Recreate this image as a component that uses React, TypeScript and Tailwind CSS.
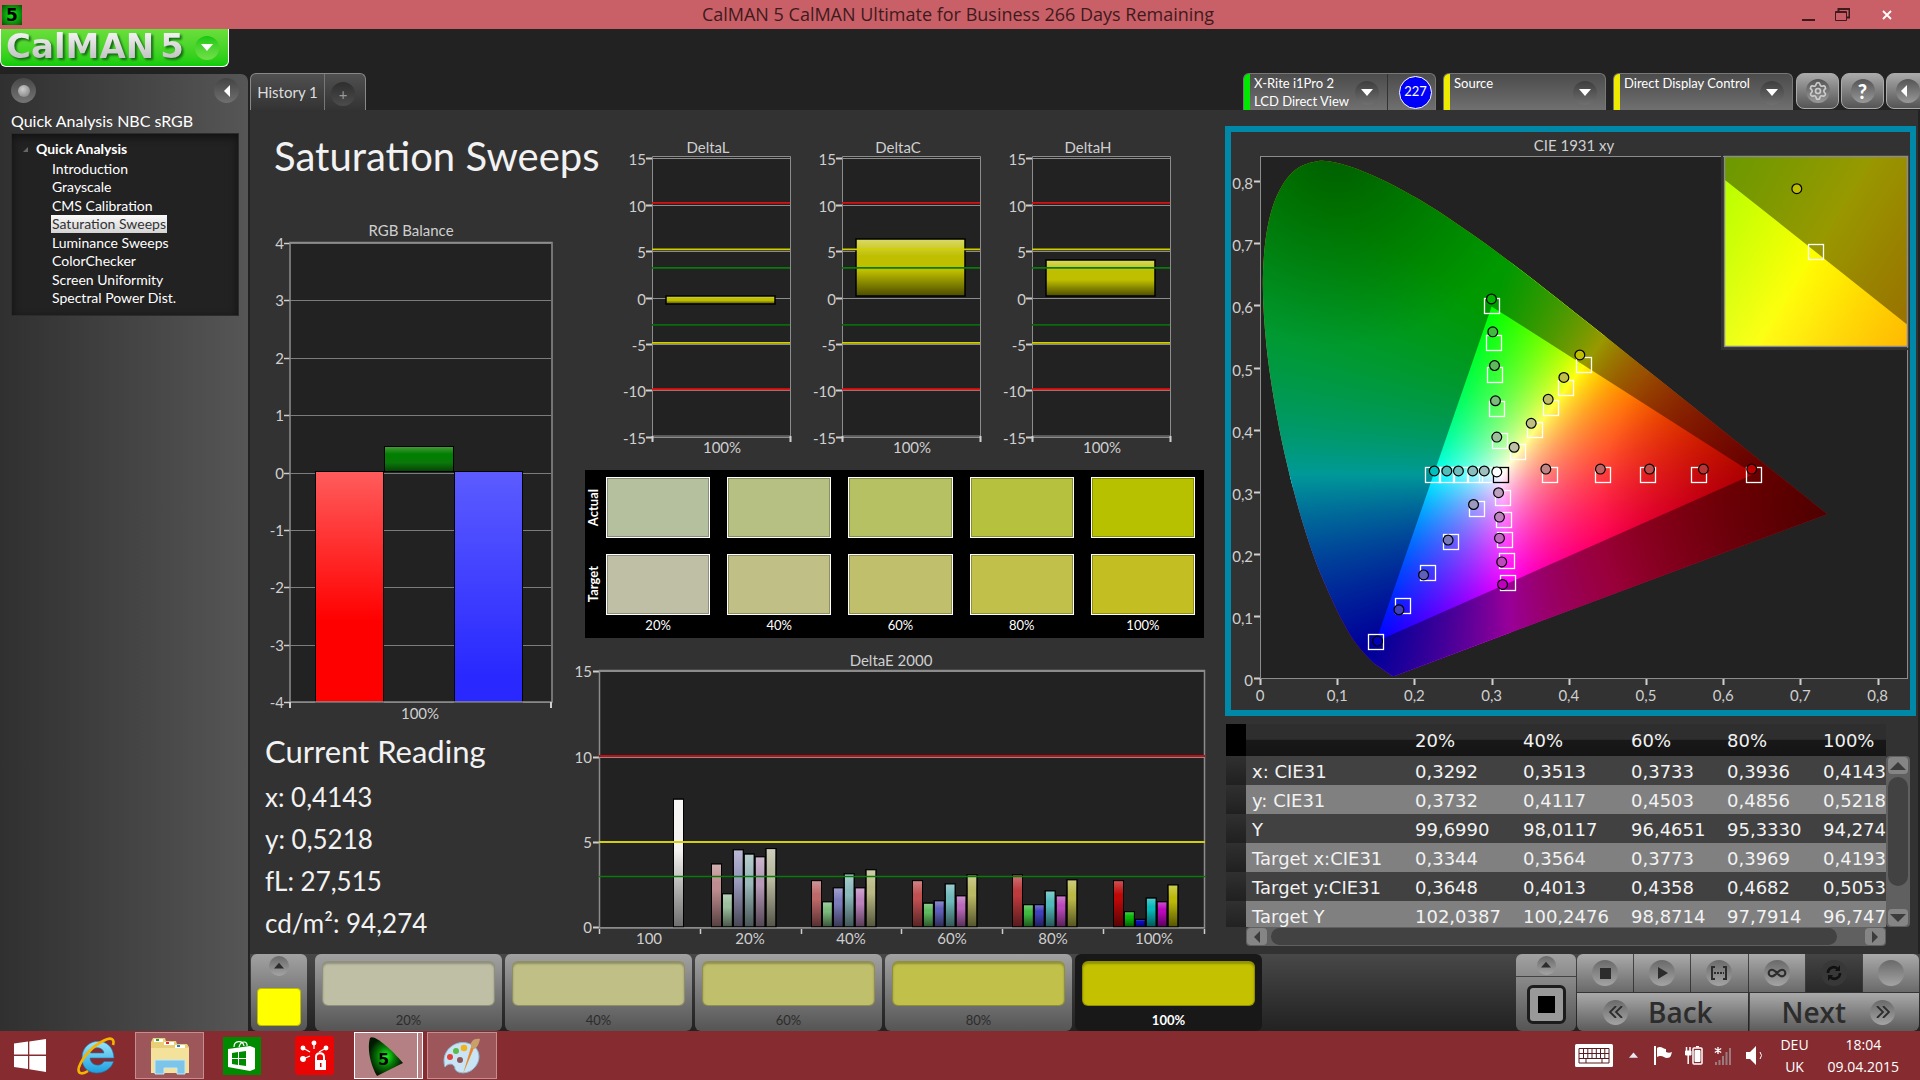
import type { ReactNode } from "react";
import { Infinity as InfinityIcon, Settings } from "lucide-react";

type Point = [number, number];

const LABEL = "fill-[#cfcfcf] font-['Lato',sans-serif] text-[15px]";

/* ---------- CIE colour field ---------- */

const WHITE: Point = [0.3127, 0.329];
const RED: Point = [0.64, 0.33];
const GREEN: Point = [0.3, 0.6];
const BLUE: Point = [0.15, 0.06];

const LOCUS: Point[] = [
  [0.1741, 0.005], [0.1714, 0.0051], [0.1644, 0.0109], [0.1566, 0.0177], [0.144, 0.0297],
  [0.1241, 0.0578], [0.1096, 0.0868], [0.0913, 0.1327], [0.0687, 0.2007], [0.0454, 0.295],
  [0.0235, 0.4127], [0.0082, 0.5384], [0.0039, 0.6548], [0.0139, 0.7502], [0.0389, 0.812],
  [0.0743, 0.8338], [0.1142, 0.8262], [0.1547, 0.8059], [0.1929, 0.7816], [0.2296, 0.7543],
  [0.3016, 0.6923], [0.3731, 0.6245], [0.4441, 0.5547], [0.5125, 0.4866], [0.5752, 0.4242],
  [0.627, 0.3725], [0.6915, 0.3083], [0.7347, 0.2653],
];

type View = { x0: number; y0: number; sx: number; sy: number; w: number; h: number };

const toPx = (v: View, [x, y]: Point): Point => [v.x0 + x * v.sx, v.y0 - y * v.sy];

const toRgb = (x: number, y: number) => {
  const z = 1 - x - y;
  return [
    3.2406 * x - 1.5372 * y - 0.4986 * z,
    -0.9689 * x + 1.8758 * y + 0.0415 * z,
    0.0557 * x - 0.204 * y + 1.057 * z,
  ];
};

// The ratio of two channels is constant along any ray that leaves the third
// primary, so one channel of a sector is a conic gradient round that primary.
const channelGradient = (v: View, center: Point, channel: number, max: number) => {
  const [cx, cy] = toPx(v, center);
  const stops: string[] = [];
  for (let deg = 0; deg <= 360; deg += 1) {
    const a = (deg * Math.PI) / 180;
    const px = cx + Math.sin(a) * v.sx * 0.05;
    const py = cy - Math.cos(a) * v.sx * 0.05;
    const rgb = toRgb((px - v.x0) / v.sx, (v.y0 - py) / v.sy);
    const ratio = rgb[max] <= 0 ? 0 : Math.min(1, Math.max(0, rgb[channel] / rgb[max]));
    const out = [0, 0, 0];
    out[channel] = Math.round(255 * ratio);
    stops.push(`rgb(${out.join(",")}) ${deg}deg`);
  }
  return `conic-gradient(from 0deg at ${cx}px ${cy}px, ${stops.join(",")})`;
};

const PRIMARIES = [RED, GREEN, BLUE];
const SOLID = ["rgb(255,0,0)", "rgb(0,255,0)", "rgb(0,0,255)"];

const sectorBackground = (v: View, max: number) => {
  const others = [0, 1, 2].filter((c) => c !== max);
  const layers = others.map((c) => channelGradient(v, PRIMARIES[3 - max - c], c, max));
  return `${layers.join(",")}, linear-gradient(${SOLID[max]}, ${SOLID[max]})`;
};

const away = (from: Point, k: number): Point => [
  WHITE[0] + (WHITE[0] - from[0]) * k,
  WHITE[1] + (WHITE[1] - from[1]) * k,
];

const polygon = (v: View, pts: Point[]) =>
  `polygon(${pts.map((p) => toPx(v, p).map((n) => `${n.toFixed(1)}px`).join(" ")).join(",")})`;

const smoothPath = (pts: Point[]) => {
  let d = `M${pts[0].join(" ")}`;
  for (let i = 0; i < pts.length - 1; i++) {
    const a = pts[Math.max(i - 1, 0)];
    const b = pts[i];
    const c = pts[i + 1];
    const e = pts[Math.min(i + 2, pts.length - 1)];
    d += `C${b[0] + (c[0] - a[0]) / 6} ${b[1] + (c[1] - a[1]) / 6} ${c[0] - (e[0] - b[0]) / 6} ${c[1] - (e[1] - b[1]) / 6} ${c[0]} ${c[1]}`;
  }
  return `${d}Z`;
};

function ColorField({ view, id }: { view: View; id: string }) {
  const locus = smoothPath(LOCUS.map((p) => toPx(view, p)));
  const triangle = `M${PRIMARIES.map((p) => toPx(view, p).join(" ")).join("L")}Z`;
  const cyan = away(RED, 6);
  const magenta = away(GREEN, 6);
  const yellow = away(BLUE, 6);
  const tip = toPx(view, [0.74, 0.27]);
  const top = toPx(view, [0.1, 0.86]);
  const sectors = [
    { max: 0, clip: "none" },
    { max: 1, clip: polygon(view, [WHITE, yellow, [-2, 3], [-2, 0.2], [WHITE[0], WHITE[1] - 0.004]]) },
    { max: 2, clip: polygon(view, [WHITE, cyan, [-2, -2], magenta]) },
  ];
  return (
    <g>
      <defs>
        <clipPath id={`${id}-locus`}>
          <path d={locus} />
        </clipPath>
        <radialGradient id={`${id}-tip`} gradientUnits="userSpaceOnUse" cx={tip[0]} cy={tip[1]} r={view.sx * 0.3}>
          <stop offset="0" stopColor="#000" stopOpacity="0.5" />
          <stop offset="0.45" stopColor="#000" stopOpacity="0.3" />
          <stop offset="1" stopColor="#000" stopOpacity="0" />
        </radialGradient>
        <radialGradient id={`${id}-top`} gradientUnits="userSpaceOnUse" cx={top[0]} cy={top[1]} r={view.sx * 0.26}>
          <stop offset="0" stopColor="#000" stopOpacity="0.4" />
          <stop offset="1" stopColor="#000" stopOpacity="0" />
        </radialGradient>
      </defs>
      <g clipPath={`url(#${id}-locus)`}>
        <foreignObject x="0" y="0" width={view.w} height={view.h}>
          <div className="grid h-full w-full">
            {sectors.map((s) => (
              <div
                key={s.max}
                className="col-start-1 row-start-1"
                style={{ background: sectorBackground(view, s.max), backgroundBlendMode: "screen", clipPath: s.clip }}
              />
            ))}
          </div>
        </foreignObject>
        <path d={`${locus}${triangle}`} fillRule="evenodd" fill="#000" fillOpacity="0.4" />
        <rect width={view.w} height={view.h} fill={`url(#${id}-tip)`} />
        <rect width={view.w} height={view.h} fill={`url(#${id}-top)`} />
      </g>
    </g>
  );
}

const SWEEPS: { targets: Point[]; readings: Point[]; colors: string[] }[] = [
  {
    targets: [[0.3107, 0.383], [0.3067, 0.4345], [0.305, 0.489], [0.3026, 0.541], [0.3, 0.6]],
    readings: [[0.3067, 0.3895], [0.305, 0.448], [0.3038, 0.5047], [0.3015, 0.559], [0.2998, 0.612]],
    colors: ["#9bbf9b", "#7cb97c", "#5fb95f", "#3fb93f", "#00b400"],
  },
  {
    targets: [[0.3344, 0.3648], [0.3564, 0.4013], [0.3773, 0.4358], [0.3969, 0.4682], [0.4193, 0.5053]],
    readings: [[0.3292, 0.3732], [0.3513, 0.4117], [0.3733, 0.4503], [0.3936, 0.4856], [0.4143, 0.5218]],
    colors: ["#bfbfa5", "#bfbf84", "#bfbc68", "#bfbe48", "#bfbf00"],
  },
  {
    targets: [[0.3755, 0.3285], [0.4443, 0.3285], [0.5027, 0.3285], [0.5681, 0.3285], [0.64, 0.3285]],
    readings: [[0.3703, 0.338], [0.4409, 0.338], [0.5045, 0.338], [0.5744, 0.338], [0.6369, 0.338]],
    colors: ["#bf8585", "#bf6262", "#c04b4b", "#b93535", "#bf0000"],
  },
  {
    targets: [[0.294, 0.3285], [0.278, 0.3285], [0.2604, 0.3285], [0.242, 0.3285], [0.224, 0.3285]],
    readings: [[0.2905, 0.335], [0.2755, 0.335], [0.257, 0.335], [0.242, 0.335], [0.2258, 0.335]],
    colors: ["#a0bfbf", "#8abfbf", "#70bfbf", "#50bcbc", "#00bfbf"],
  },
  {
    targets: [[0.3142, 0.292], [0.316, 0.2557], [0.3171, 0.2237], [0.3194, 0.1904], [0.3212, 0.1547]],
    readings: [[0.309, 0.3], [0.3102, 0.2607], [0.3102, 0.2268], [0.3131, 0.1886], [0.3142, 0.1522]],
    colors: ["#bf9fbf", "#bf82bf", "#bf68bf", "#bf48bf", "#bf00bf"],
  },
  {
    targets: [[0.2807, 0.2736], [0.2472, 0.22], [0.2171, 0.1707], [0.1853, 0.1177], [0.15, 0.06]],
    readings: [[0.2766, 0.281], [0.2437, 0.2237], [0.2119, 0.1676], [0.18, 0.1115], [0.1523, 0.061]],
    colors: ["#9a9abf", "#7878bb", "#6060bb", "#4040bb", "#0000bb"],
  },
];

function SweepMarks({ view }: { view: View }) {
  const box = (p: Point, stroke: string) => {
    const [x, y] = toPx(view, p);
    return (
      <rect key={`${p}`} x={Math.round(x) - 7.5} y={Math.round(y) - 7.5} width="15" height="15" fill="none" stroke={stroke} strokeWidth="1.3" />
    );
  };
  const dot = (p: Point, fill: string) => {
    const [x, y] = toPx(view, p);
    return <circle key={`${p}`} cx={x} cy={y} r="4.9" fill={fill} stroke="#000" strokeWidth="1.2" />;
  };
  return (
    <g>
      {SWEEPS.map((s, i) => (
        <g key={i}>{s.targets.map((p) => box(p, "#fff"))}</g>
      ))}
      {box(WHITE, "#000")}
      {SWEEPS.map((s, i) => (
        <g key={i}>{s.readings.map((p, j) => dot(p, s.colors[j]))}</g>
      ))}
      {dot([0.3067, 0.3335], "#fff")}
    </g>
  );
}

const MAIN_VIEW: View = { x0: 29, y0: 547, sx: 772, sy: 621, w: 677, h: 574 };
const INSET = { x: 493, y: 24, w: 184, h: 191 };
const INSET_VIEW: View = {
  x0: 92 - 0.4193 * 3840,
  y0: 96 + 0.5053 * 3836,
  sx: 3840,
  sy: 3836,
  w: 184,
  h: 191,
};

function CieChart() {
  const ticks = [0, 1, 2, 3, 4, 5, 6, 7, 8];
  const name = (n: number) => (n === 0 ? "0" : `0,${n}`);
  return (
    <svg viewBox="0 0 679 578" className="block w-full">
      <text x="343" y="19" textAnchor="middle" className={LABEL}>CIE 1931 xy</text>
      <rect x="29.5" y="24.5" width="647" height="522" fill="#222" />
      <ColorField view={MAIN_VIEW} id="cie" />
      <rect x="29.5" y="24.5" width="647" height="522" fill="none" stroke="#8c8c8c" />
      {ticks.map((n) => (
        <g key={n}>
          <path d={`M23 ${Math.round(547 - n * 62.1) - 0.5}h6M${Math.round(29 + n * 77.2) + 0.5} 547v6`} stroke="#cfcfcf" strokeWidth="2" />
          <text x="22" y={554 - n * 62.1} textAnchor="end" className={LABEL}>{name(n)}</text>
          <text x={29 + n * 77.2} y="569" textAnchor="middle" className={LABEL}>{name(n)}</text>
        </g>
      ))}
      <SweepMarks view={MAIN_VIEW} />
      <svg x={INSET.x} y={INSET.y} width={INSET.w} height={INSET.h}>
        <ColorField view={INSET_VIEW} id="inset" />
        <SweepMarks view={INSET_VIEW} />
      </svg>
      <rect x={INSET.x - 2} y={INSET.y - 1} width={INSET.w + 3} height={INSET.h + 3} fill="none" stroke="#323232" strokeWidth="2" />
      <rect x={INSET.x + 0.5} y={INSET.y + 0.5} width={INSET.w - 1} height={INSET.h - 1} fill="none" stroke="#8c8c8c" strokeWidth="1.5" />
    </svg>
  );
}

/* ---------- bar charts ---------- */

function RgbBalance() {
  const y = (v: number) => Math.round(29 + (4 - v) * 57.4) + 0.5;
  return (
    <svg viewBox="0 0 320 515" className="block w-full">
      <defs>
        <linearGradient id="rb-red" x2="0" y2="1">
          <stop offset="0" stopColor="#ff5c5c" />
          <stop offset="0.65" stopColor="#f00" />
        </linearGradient>
        <linearGradient id="rb-blue" x2="0" y2="1">
          <stop offset="0" stopColor="#5c5cff" />
          <stop offset="0.9" stopColor="#2828ff" />
        </linearGradient>
        <linearGradient id="rb-green" x2="0" y2="1">
          <stop offset="0" stopColor="#4a9a3c" />
          <stop offset="0.3" stopColor="#008000" />
          <stop offset="0.65" stopColor="#0a780a" />
          <stop offset="1" stopColor="#064006" />
        </linearGradient>
      </defs>
      <text x="161" y="22" textAnchor="middle" className={LABEL}>RGB Balance</text>
      <rect x="40.5" y="28.5" width="261" height="459" fill="#222" />
      {[4, 3, 2, 1, 0, -1, -2, -3, -4].map((v) => (
        <g key={v}>
          <path d={`M40 ${y(v)}h261`} stroke="#7c7c7c" />
          <path d={`M34 ${y(v)}h6`} stroke="#cfcfcf" strokeWidth="1.5" />
          <text x="34" y={y(v) + 5} textAnchor="end" className={LABEL}>{v}</text>
        </g>
      ))}
      <rect x="65.5" y="257.5" width="68" height="231" fill="url(#rb-red)" stroke="#000" />
      <rect x="134.5" y="232.5" width="69" height="25" fill="url(#rb-green)" stroke="#000" />
      <rect x="204.5" y="257.5" width="68" height="231" fill="url(#rb-blue)" stroke="#000" />
      <path d="M40 28.5H302V488H40Z" fill="none" stroke="#8c8c8c" strokeWidth="1.5" />
      <path d="M40 488v6M301 488v6" stroke="#cfcfcf" strokeWidth="2" />
      <text x="170" y="505" textAnchor="middle" className={LABEL}>100%</text>
    </svg>
  );
}

function DeltaChart({ title, from, to }: { title: string; from: number; to: number }) {
  const y = (v: number) => Math.round(161.5 - v * 9.27) + 0.5;
  const limits: [number, string][] = [
    [10.2, "#d81010"], [5.2, "#d2cf00"], [3.2, "#0b7a0b"], [-2.95, "#0b6a0b"], [-4.9, "#d2cf00"], [-9.9, "#e81010"],
  ];
  return (
    <svg viewBox="0 0 190 325" className="block min-w-0 flex-1">
      <defs>
        <linearGradient id={title} x2="0" y2="1">
          <stop offset="0" stopColor="#dada68" />
          <stop offset="0.3" stopColor="#bfbf00" />
          <stop offset="0.55" stopColor="#bfbf00" />
          <stop offset="1" stopColor="#4c4c00" />
        </linearGradient>
      </defs>
      <text x="87" y="17" textAnchor="middle" className={LABEL}>{title}</text>
      <rect x="31" y="20" width="138" height="280" fill="#222" />
      {[15, 10, 5, 0, -5, -10, -15].map((v) => (
        <g key={v}>
          <path d={`M31 ${y(v)}h138`} stroke="#8c8c8c" />
          <path d={`M25 ${y(v)}h6`} stroke="#cfcfcf" strokeWidth="2" />
          <text x="25" y={y(v) + 6} textAnchor="end" className={LABEL}>{v}</text>
        </g>
      ))}
      <path d="M31.5 20.5h138V300H31.5Z" fill="none" stroke="#8c8c8c" />
      <path d="M31.5 300v6M169.5 300v6" stroke="#cfcfcf" strokeWidth="2" />
      <rect x="45" y={from} width="109" height={to - from} fill={`url(#${title})`} stroke="#000" strokeWidth="1.5" />
      {limits.map(([v, c]) => (
        <path key={v} d={`M31 ${161.5 - v * 9.27}h138`} stroke={c} strokeWidth="1.8" />
      ))}
      <text x="101" y="317" textAnchor="middle" className={LABEL}>100%</text>
    </svg>
  );
}

const DELTA_E: { label: string; x: number; bars: [number, string][] }[] = [
  { label: "100", x: 103, bars: [[7.5, "#f4f3f2"]] },
  { label: "20%", x: 141, bars: [[3.7, "#bf8d8f"], [1.95, "#9cbf9e"], [4.53, "#9c9cbf"], [4.28, "#9cb9ba"], [4.12, "#b79ab7"], [4.6, "#babaa0"]] },
  { label: "40%", x: 241, bars: [[2.72, "#bd6869"], [1.48, "#7cb97c"], [2.3, "#7c7cbc"], [3.12, "#8cbabc"], [2.3, "#bc82bc"], [3.36, "#babb84"]] },
  { label: "60%", x: 342, bars: [[2.72, "#bf4f50"], [1.4, "#5fb95f"], [1.54, "#5f5fb9"], [2.53, "#70b9ba"], [1.83, "#ba68ba"], [3.06, "#bab964"]] },
  { label: "80%", x: 442, bars: [[3.06, "#bd3a3d"], [1.31, "#40b940"], [1.31, "#4040bc"], [2.12, "#52b9ba"], [1.83, "#ba48ba"], [2.77, "#bab948"]] },
  { label: "100%", x: 543, bars: [[2.72, "#bd0808"], [0.9, "#08b908"], [0.45, "#0a0abc"], [1.7, "#08baba"], [1.48, "#bb08bb"], [2.47, "#bab908"]] },
];

function DeltaEChart() {
  const y = (v: number) => 277 - v * 17.05;
  return (
    <svg viewBox="0 0 655 304" className="block w-full">
      <defs>
        <linearGradient id="shade" x2="0" y2="1">
          <stop offset="0" stopColor="#fff" stopOpacity="0.3" />
          <stop offset="0.3" stopColor="#fff" stopOpacity="0" />
          <stop offset="0.4" stopColor="#000" stopOpacity="0" />
          <stop offset="1" stopColor="#000" stopOpacity="0.55" />
        </linearGradient>
      </defs>
      <text x="321" y="16" textAnchor="middle" className={LABEL}>DeltaE 2000</text>
      <rect x="29" y="20" width="605" height="258" fill="#222" />
      {[15, 10, 5, 0].map((v) => (
        <g key={v}>
          <path d={`M29 ${Math.round(y(v)) + 0.5}h605`} stroke="#8c8c8c" />
          <path d={`M23 ${Math.round(y(v)) + 0.5}h6`} stroke="#cfcfcf" strokeWidth="2" />
          <text x="22" y={Math.round(y(v)) + 6} textAnchor="end" className={LABEL}>{v}</text>
        </g>
      ))}
      {DELTA_E.map((group, g) => (
        <g key={group.label}>
          {group.bars.map(([v, c], i) => (
            <g key={i} stroke="#000">
              <rect x={group.x + i * 10.9 + 0.5} y={y(v)} width="10" height={v * 17.05} fill={c} />
              <rect x={group.x + i * 10.9 + 0.5} y={y(v)} width="10" height={v * 17.05} fill="url(#shade)" />
            </g>
          ))}
          <text x={79 + g * 101} y="294" textAnchor="middle" className={LABEL}>{group.label}</text>
        </g>
      ))}
      <path d="M29.5 20.5h605v257.5H29.5Z" fill="none" stroke="#8c8c8c" strokeWidth="1.5" />
      {[0, 1, 2, 3, 4, 5, 6].map((n) => (
        <path key={n} d={`M${Math.round(29 + n * 100.8) + 0.5} 279v5`} stroke="#cfcfcf" strokeWidth="1.5" />
      ))}
      <path d="M29 106h606" stroke="#c01014" strokeWidth="2" />
      <path d="M29 192h606" stroke="#d2cf10" strokeWidth="2" />
      <path d="M29 226.5h606" stroke="#0b7a0b" strokeWidth="1.5" />
    </svg>
  );
}

/* ---------- panels ---------- */

const ACTUAL = ["bg-[#b5c09f]", "bg-[#b5c082]", "bg-[#b6c164]", "bg-[#b6c13e]", "bg-[#b8c100]"];
const TARGET = ["bg-[#bfbfa5]", "bg-[#c0bf86]", "bg-[#c0bf6b]", "bg-[#c0c04b]", "bg-[#c3bf22]"];
const STEPS = ["20%", "40%", "60%", "80%", "100%"];

function Swatches() {
  const row = (name: string, colors: string[]) => (
    <div className="flex items-center">
      <span className="flex w-[21px] justify-center text-[13px] font-bold leading-4 [writing-mode:sideways-lr]">{name}</span>
      <div className="grid flex-1 grid-cols-5 gap-[17px]">
        {colors.map((c) => (
          <div key={c} className={`h-[61px] border border-white outline outline-1 -outline-offset-2 outline-black/25 ${c}`} />
        ))}
      </div>
    </div>
  );
  return (
    <div className="ml-[15px] mr-[21px] flex flex-col gap-4 bg-black pb-[3px] pr-[9px] pt-[7px]">
      {row("Actual", ACTUAL)}
      {row("Target", TARGET)}
      <div className="-mt-4 ml-[21px] grid grid-cols-5 gap-[17px] text-center text-[13px] leading-5">
        {STEPS.map((s) => <span key={s}>{s}</span>)}
      </div>
    </div>
  );
}

const ROWS = [
  ["x: CIE31", "0,3292", "0,3513", "0,3733", "0,3936", "0,4143"],
  ["y: CIE31", "0,3732", "0,4117", "0,4503", "0,4856", "0,5218"],
  ["Y", "99,6990", "98,0117", "96,4651", "95,3330", "94,274"],
  ["Target x:CIE31", "0,3344", "0,3564", "0,3773", "0,3969", "0,4193"],
  ["Target y:CIE31", "0,3648", "0,4013", "0,4358", "0,4682", "0,5053"],
  ["Target Y", "102,0387", "100,2476", "98,8714", "97,7914", "96,747"],
];

function ScrollArrow({ label, points }: { label: string; points: string }) {
  return (
    <button aria-label={label} className="flex h-[17px] w-5 items-center justify-center rounded bg-[#858585]">
      <svg viewBox="0 0 16 12" className="h-3 w-4"><polygon points={points} fill="#3c3c3c" /></svg>
    </button>
  );
}

function ReadingsTable() {
  return (
    <div className="mx-px mt-2 flex flex-col pr-[7px]">
      <div className="flex h-[203px]">
        <div className="min-w-0 flex-1 overflow-hidden">
          <table className="w-[725px] table-fixed border-collapse text-left font-['DejaVu_Sans',sans-serif] text-[18px] text-[#f2f2f2]">
            <colgroup>
              <col className="w-5" />
              <col className="w-[163px]" />
              <col className="w-[108px]" />
              <col className="w-[108px]" />
              <col className="w-24" />
              <col className="w-24" />
              <col />
            </colgroup>
            <thead>
              <tr className="h-8 bg-[linear-gradient(#2e2e2e_48%,#181818_50%,#141414)]">
                <th className="bg-black" />
                <th />
                {STEPS.map((s) => <th key={s} scope="col" className="px-[6px] pt-[2px] font-normal leading-6">{s}</th>)}
              </tr>
            </thead>
            <tbody>
              {ROWS.map((r) => (
                <tr key={r[0]} className="h-[29px] bg-[#414141] even:bg-[#808080]">
                  <td className="bg-linear-to-b from-[#303030] to-[#202020]" />
                  <th scope="row" className="whitespace-nowrap px-[6px] pt-[2px] font-normal leading-6">{r[0]}</th>
                  {r.slice(1).map((c) => <td key={c} className="whitespace-nowrap px-[6px] pt-[2px] leading-6">{c}</td>)}
                </tr>
              ))}
            </tbody>
          </table>
        </div>
        <div className="mt-8 flex w-6 flex-col items-center rounded bg-[#606060] py-px">
          <ScrollArrow label="Scroll up" points="0,10 8,2 16,10" />
          <div className="my-[3px] w-5 basis-[109px] rounded-full bg-[#424242]" />
          <div className="flex-1" />
          <ScrollArrow label="Scroll down" points="0,2 8,10 16,2" />
        </div>
      </div>
      <div className="ml-5 mr-6 flex items-center rounded bg-[#606060] px-px py-px">
        <ScrollArrow label="Scroll left" points="11,0 5,6 11,12" />
        <div className="ml-1 h-[17px] basis-[566px] rounded-full bg-[#424242]" />
        <div className="flex-1" />
        <ScrollArrow label="Scroll right" points="5,0 11,6 5,12" />
      </div>
    </div>
  );
}

function Triangle({ className = "size-3", points = "0,0 12,0 6,7" }: { className?: string; points?: string }) {
  return (
    <svg viewBox="0 0 12 12" className={className}><polygon points={points} fill="currentColor" /></svg>
  );
}

const PAGES = ["Introduction", "Grayscale", "CMS Calibration", "Saturation Sweeps", "Luminance Sweeps", "ColorChecker", "Screen Uniformity", "Spectral Power Dist."];

function Sidebar() {
  return (
    <aside className="flex w-[249px] shrink-0 flex-col rounded-tr-lg border-r border-t border-[#222] bg-linear-to-r from-[#303030] to-[#565656] pl-[11px] pr-[9px] pt-1">
      <div className="flex items-center justify-between">
        <button aria-label="Record" className="flex size-[25px] items-center justify-center rounded-full bg-linear-to-b from-[#484848] to-[#757575]">
          <span className="size-3 rounded-full bg-[radial-gradient(circle_at_40%_35%,#ccc,#777)]" />
        </button>
        <button aria-label="Collapse" className="flex size-[25px] items-center justify-center rounded-full bg-linear-to-b from-[#444] to-[#707070] text-white">
          <Triangle points="9,0 9,12 3,6" />
        </button>
      </div>
      <h2 className="mt-[6px] text-[16px] leading-6">Quick Analysis NBC sRGB</h2>
      <nav className="border border-[#2c2c2c] bg-[#222] pb-2 pt-1 text-[14px] shadow-[inset_0_3px_8px_#111]">
        <div className="flex items-center gap-2 pl-[11px] leading-[22px]">
          <Triangle className="size-[5px] text-[#666]" points="12,0 12,12 0,12" />
          <b>Quick Analysis</b>
        </div>
        <ul className="ml-[39px] flex h-[147px] flex-col justify-between">
          {PAGES.map((p) => (
            <li key={p} className="flex h-[18px] items-center">
              <a
                href="#"
                className={p === "Saturation Sweeps" ? "bg-linear-to-b from-[#fafafa] to-[#d4d4d4] px-px leading-[18px] text-[#333]" : "px-px leading-[18px]"}
              >
                {p}
              </a>
            </li>
          ))}
        </ul>
      </nav>
    </aside>
  );
}

function Dropdown({ label, bar, className, children }: { label: ReactNode; bar: string; className: string; children?: ReactNode }) {
  return (
    <div className={`flex h-[37px] overflow-hidden rounded-t-md border border-b-0 border-[#777] bg-linear-to-b from-[#4c4c4c] to-[#707070] ${className}`}>
      <span className={`w-[6px] shrink-0 ${bar}`} />
      <button className="flex flex-1 justify-between pl-1 pr-2 text-left text-[13px] leading-[18px]">
        <span className="whitespace-nowrap">{label}</span>
        <span className="mt-[7px] flex h-6 w-6 shrink-0 items-center justify-center rounded-full bg-linear-to-b from-[#3e3e3e] to-[#707070]">
          <Triangle className="mt-1 size-3" />
        </span>
      </button>
      {children}
    </div>
  );
}

function RoundedTool({ label, children }: { label: string; children: ReactNode }) {
  return (
    <button aria-label={label} className="flex h-9 w-[43px] items-center justify-center rounded-lg border border-[#aaa] bg-linear-to-b from-[#aaa] to-[#555]">
      <span className="flex h-6 w-6 items-center justify-center rounded-full bg-linear-to-b from-[#555] to-[#999] text-white">{children}</span>
    </button>
  );
}

function TopBar() {
  return (
    <div className="flex h-[37px] items-start justify-between">
      <div className="flex h-[37px] items-stretch rounded-t-md border border-b-0 border-[#888] bg-linear-to-b from-[#505050] to-[#333] text-[#ddd]">
        <button className="w-[73px] text-[15px]">History 1</button>
        <button aria-label="Add history" className="flex w-[41px] items-center justify-center border-l border-[#777] pr-1">
          <span className="mt-1 flex size-6 items-center justify-center rounded-full bg-linear-to-b from-[#2e2e2e] to-[#4c4c4c] text-[15px] text-[#999]">+</span>
        </button>
      </div>
      <div className="flex">
        <Dropdown label={<>X-Rite i1Pro 2<br />LCD Direct View</>} bar="bg-[#00e800]" className="w-[193px]">
          <span className="flex w-12 items-center justify-center border-l border-[#333] pl-2">
            <span className="flex size-[33px] items-center justify-center rounded-full border border-white bg-[#0000fa] text-[13px]">227</span>
          </span>
        </Dropdown>
        <Dropdown label="Source" bar="bg-[#eeea00]" className="ml-[7px] w-[163px]" />
        <Dropdown label="Direct Display Control" bar="bg-[#eeea00]" className="ml-[7px] w-[180px]" />
        <div className="ml-[3px] flex w-[124px] gap-[2px] overflow-hidden [&>*]:shrink-0">
          <RoundedTool label="Settings"><Settings className="size-5 text-[#ccc]" /></RoundedTool>
          <RoundedTool label="Help"><span className="text-[20px] font-black leading-5">?</span></RoundedTool>
          <RoundedTool label="Collapse panel"><Triangle className="mr-2 size-3" points="9,0 9,12 3,6" /></RoundedTool>
        </div>
      </div>
    </div>
  );
}

const PATTERNS = ["bg-[#bfbfa5]", "bg-[#c0bf86]", "bg-[#c0bf6b]", "bg-[#c0c04b]", "bg-[#c3c100]"];

function Transport({ label, active, children }: { label: string; active?: boolean; children?: ReactNode }) {
  return (
    <button
      aria-label={label}
      className={`flex h-[38px] items-center justify-center ${active ? "bg-linear-to-b from-[#444] to-[#2a2a2a]" : "bg-linear-to-b from-[#aaa] to-[#6a6a6a]"}`}
    >
      <span className={`flex size-[26px] items-center justify-center rounded-full ${active ? "bg-[#383838] text-[#111]" : "bg-linear-to-b from-[#6a6a6a] to-[#a4a4a4] text-[#2c2c2c]"}`}>
        {children}
      </span>
    </button>
  );
}

function BottomBar() {
  const cap = "bg-linear-to-b from-[#6a6a6a] to-[#a4a4a4] text-[#2c2c2c] rounded-full flex items-center justify-center";
  return (
    <div className="flex h-[77px] justify-between bg-linear-to-b from-[#484848] to-[#222] pl-px pr-px">
      <div className="flex">
        <div className="mr-2 flex w-14 flex-col items-center justify-between rounded-md bg-linear-to-b from-[#a2a2a2] to-[#555] pb-[5px] pt-[2px]">
          <button aria-label="Expand patterns" className={`size-5 ${cap}`}><Triangle className="size-[10px]" points="0,9 12,9 6,2" /></button>
          <span className="h-[38px] w-11 rounded border border-[#bdbd00] bg-[#ff0]" />
        </div>
        {STEPS.map((s, i) => (
          <button
            key={s}
            className={`mr-[3px] flex w-[187px] flex-col items-center rounded-md px-[7px] pt-[7px] text-[13px] ${i === 4 ? "bg-[#181818] font-bold text-white" : "bg-linear-to-b from-[#a2a2a2] to-[#555] text-[#2c2c2c]"}`}
          >
            <span className={`h-[45px] w-full rounded-md border border-black/25 shadow-[inset_0_2px_2px_rgba(0,0,0,0.25)] ${PATTERNS[i]}`} />
            <span className="mt-1 leading-5">{s}</span>
          </button>
        ))}
      </div>
      <div className="flex">
        <div className="mr-px flex w-[60px] flex-col rounded-md bg-linear-to-b from-[#a2a2a2] to-[#555]">
          <button aria-label="Expand window" className="flex h-[23px] items-center justify-center border-b border-[#444]">
            <span className={`size-[19px] ${cap}`}><Triangle className="size-[10px]" points="0,9 12,9 6,2" /></span>
          </button>
          <button aria-label="Pattern window" className="m-auto flex size-[39px] items-center justify-center rounded-md border-[3px] border-[#1c1c1c] bg-[#999]">
            <span className="size-[17px] bg-black" />
          </button>
        </div>
        <div className="grid w-[342px] grid-cols-6 content-start gap-px overflow-hidden rounded-md">
          <Transport label="Stop"><span className="size-[11px] bg-current" /></Transport>
          <Transport label="Play"><Triangle points="2,0 12,6 2,12" /></Transport>
          <Transport label="Read series">
            <svg viewBox="0 0 16 14" className="w-4" fill="none" stroke="currentColor" strokeWidth="2"><path d="M4 1H1v12h3M12 1h3v12h-3M3 7h2m1 0h2m1 0h2m1 0h1" /></svg>
          </Transport>
          <Transport label="Continuous"><InfinityIcon className="size-5" strokeWidth={2.5} /></Transport>
          <Transport label="Repeat" active>
            <svg viewBox="0 0 16 16" className="w-4" fill="none" stroke="currentColor" strokeWidth="2.6"><path d="M2 8a5.5 5.5 0 0 1 9.5-4M14 8a5.5 5.5 0 0 1-9.5 4" /><path d="M14 0v6H9zM2 16v-6h5z" fill="currentColor" stroke="none" /></svg>
          </Transport>
          <Transport label="Record" />
          <button className="col-span-3 flex h-[38px] items-center bg-linear-to-b from-[#aaa] to-[#5c5c5c] pl-[26px] text-[#2c2c2c]">
            <span className={`size-[25px] ${cap}`}>
              <svg viewBox="0 0 14 12" className="w-[14px]" fill="none" stroke="currentColor" strokeWidth="1.8"><path d="M7 0 1 6l6 6M13 0 7 6l6 6" /></svg>
            </span>
            <span className="ml-5 font-['Open_Sans',sans-serif] text-[28px] font-semibold">Back</span>
          </button>
          <button className="col-span-3 flex h-[38px] items-center border-l border-[#444] bg-linear-to-b from-[#aaa] to-[#5c5c5c] pl-8 text-[#2c2c2c]">
            <span className="mr-6 font-['Open_Sans',sans-serif] text-[28px] font-semibold">Next</span>
            <span className={`size-[25px] ${cap}`}>
              <svg viewBox="0 0 14 12" className="w-[14px]" fill="none" stroke="currentColor" strokeWidth="1.8"><path d="m1 0 6 6-6 6M7 0l6 6-6 6" /></svg>
            </span>
          </button>
        </div>
      </div>
    </div>
  );
}

/* ---------- desktop chrome ---------- */

function TaskTile({ label, className, children }: { label: string; className?: string; children: ReactNode }) {
  return (
    <button aria-label={label} className={`flex h-[47px] items-center justify-center ${className ?? ""}`}>{children}</button>
  );
}

function Taskbar() {
  return (
    <footer className="flex h-[49px] items-center justify-between bg-[#862c31] font-['Open_Sans',sans-serif] text-white">
      <div className="flex items-center">
        <TaskTile label="Start" className="w-[60px]">
          <svg viewBox="0 0 32 33" className="w-8" fill="#fff"><path d="M0 4.5 14 2.6V15.5H0zM15.3 2.4 32 0v15.5H15.3zM0 17h14v13L0 28zM15.3 17H32v16L15.3 30.3z" /></svg>
        </TaskTile>
        <TaskTile label="Internet Explorer" className="w-[71px]">
          <svg viewBox="0 0 40 40" className="w-10">
            <defs><linearGradient id="ie" x2="0" y2="1"><stop offset="0" stopColor="#9be6fa" /><stop offset="1" stopColor="#1c9fe0" /></linearGradient></defs>
            <path d="M38 22H14c.4 8 11 9.5 14 3.5h9.5C33 41 5 42 6 21 7 1 37-1 38 22zM14.5 17H28c-1-7-12.500-7-13.500 0z" fill="url(#ie)" stroke="#1478b8" strokeWidth=".6" />
            <path d="M37 9c2-6-2-8-8-5C18 9 7 20 3 31c-2 7 3 8 9 4" fill="none" stroke="#f5b400" strokeWidth="2.6" />
          </svg>
        </TaskTile>
        <TaskTile label="File Explorer" className="ml-1 w-[69px] border border-[#c58d90] bg-[#9d575b]">
          <svg viewBox="0 0 40 38" className="w-10">
            <path d="M1 5 3 1h12l1 3h10l1 3h10l2 3v26H1z" fill="#e8cf78" />
            <path d="M4 2h9v3H4zM14 5h10v3H14zM25 8h10v3H25z" fill="#fff" />
            <path d="M6 2h3v2H6z" fill="#2a9d3a" /><path d="M16 5h3v2h-3z" fill="#d33" /><path d="M27 8h3v2h-3z" fill="#28c" />
            <path d="M1 11h38v25H1z" fill="#f4e29a" />
            <path d="M5 23h30v14h-8v-6H14v6H5z" fill="#7cc4e8" stroke="#c4e8fa" />
          </svg>
        </TaskTile>
        <TaskTile label="Store" className="ml-[19px] w-[38px]">
          <svg viewBox="0 0 38 38" className="w-[38px]">
            <path d="M0 0h38v38H0z" fill="#008a00" />
            <path d="M5 12 27 9l5 2v21l-5 2-22-4z" fill="#fff" />
            <path d="M11 10c0-7 9-7 10-1M16 10c2-7 9-6 8-1" fill="none" stroke="#fff" strokeWidth="1.2" />
            <path d="m9 16 6-1v6H9zM16 15l7-1v7h-7zM9 22h6v6l-6-1zM16 22h7v7l-7-1z" fill="#008a00" />
          </svg>
        </TaskTile>
        <TaskTile label="Password manager" className="ml-[34px] w-[39px]">
          <svg viewBox="0 0 39 39" className="w-[39px]">
            <rect width="39" height="39" rx="3" fill="#ea0404" />
            <g stroke="#fff" strokeWidth="1.3" fill="#fff"><path d="M19 6v7M8 12l7 4M31 12l-7 4M8 23l7-3" /><circle cx="19" cy="7" r="1.8" /><circle cx="8" cy="12" r="1.8" /><circle cx="31" cy="12" r="1.8" /><circle cx="8" cy="23" r="2.3" /></g>
            <path d="M21 24v-3c0-5 8-5 8 0v3" fill="none" stroke="#fff" strokeWidth="2" />
            <path d="M20 24h11v10H20z" fill="#fff" /><path d="M25 27h1.5v4H25z" fill="#d00" />
          </svg>
        </TaskTile>
        <TaskTile label="CalMAN" className="ml-5 w-[64px] border border-white bg-[#b58084]">
          <svg viewBox="0 0 36 40" className="w-9">
            <defs><radialGradient id="cal"><stop offset="0" stopColor="#1dff1d" /><stop offset=".5" stopColor="#067a06" /><stop offset="1" stopColor="#021a02" /></radialGradient></defs>
            <path d="M2 2C6-2 22 12 35 27L9 40C2 28-1 12 2 2z" fill="url(#cal)" />
            <text x="10" y="29" className="fill-black font-['DejaVu_Sans',sans-serif] text-[16px] font-bold">5</text>
          </svg>
        </TaskTile>
        <span className="mr-1 h-[47px] w-[5px] border border-l-0 border-white bg-[#b58084]" />
        <TaskTile label="Paint" className="w-[70px] border border-[#c58d90] bg-[#9d575b]">
          <svg viewBox="0 0 38 38" className="w-[38px]">
            <path d="M2 30C-3 14 12 3 24 6c13 3 15 16 8 24-6 8-18 7-20 2 0-5-6-7-10-2z" fill="#c9e4f4" stroke="#8fb9d4" />
            <circle cx="17" cy="23" r="3" fill="#8f5457" />
            <circle cx="7" cy="20" r="3" fill="#e0413a" /><circle cx="13" cy="14" r="3" fill="#5cba48" /><circle cx="21" cy="11" r="3.3" fill="#f2b21c" />
            <path d="m20 37 8-27 3 1z" fill="#e88a2c" /><path d="M28 10c-1-6 3-9 9-8-1 5-3 9-6 10z" fill="#c9a06c" />
          </svg>
        </TaskTile>
      </div>
      <div className="flex items-center pr-[21px]">
        <svg viewBox="0 0 38 23" className="mr-4 w-[38px]">
          <rect width="38" height="23" rx="1.5" fill="#fff" />
          <path d="M4 4.5h30v14.5H4zM4 9.5h30M4 14.5h30M8.5 4v10M12.8 4v10M17 4v10M21.3 4v10M25.5 4v10M29.8 4v10M11 14v5M27 14v5" fill="none" stroke="#5a1c20" />
        </svg>
        <Triangle className="mr-4 size-[9px] text-[#e8e8f4]" points="0,9 12,9 6,2" />
        <svg viewBox="0 0 19 19" className="mr-3 w-[19px]"><path d="M0 0h2v19H0zM3 2c4-3 6 1 9 1v3c2 1 4 1 6 0-1 3-1 6-5 6-3 0-5-4-10-1z" fill="#fff" /></svg>
        <svg viewBox="0 0 18 19" className="mr-[11px] w-[18px]" fill="none" stroke="#fff"><rect x="8" y="2" width="9" height="16" rx="1" strokeWidth="1.5" /><path d="M10 4.5h5v11h-5z" fill="#fff" /><path d="M11 .8h3M1.5 1v4M5 1v4M3.2 9v9" strokeWidth="1.5" /><path d="M.5 5h5.5v4h-5.500z" fill="#fff" /></svg>
        <svg viewBox="0 0 17 19" className="mr-[15px] w-[17px]"><path d="M1 16h2v3H1zM4.5 14h2v5h-2zM8 10h2v9H8zM11.5 6h2v13h-2zM15 2h2v17h-2z" fill="#9a7c7e" /><path d="M4 1v7M.8 2.5l6.4 4M7.2 2.5l-6.4 4" stroke="#fff" strokeWidth="1.3" /></svg>
        <svg viewBox="0 0 18 19" className="mr-4 w-[18px]"><path d="M0 6h4l6-6v19l-6-6H0z" fill="#fff" /><path d="M14 6q3 3.5 0 7" fill="none" stroke="#fff" /></svg>
        <div className="mr-[19px] text-center text-[14px] leading-[22px]">DEU<br />UK</div>
        <div className="text-center text-[14px] leading-[22px]">18:04<br />09.04.2015</div>
      </div>
    </footer>
  );
}

function TitleBar() {
  return (
    <header className="flex h-[29px] items-center justify-between bg-[#c96067] pl-[2px] pr-[5px] font-['Open_Sans',sans-serif] text-[#3f1a1d]">
      <span className="flex size-5 items-center justify-center bg-[radial-gradient(#12f012,#065006)] font-['DejaVu_Sans',sans-serif] text-[17px] font-bold leading-5 text-black">5</span>
      <h1 className="ml-[103px] text-[18px]">CalMAN 5 CalMAN Ultimate for Business 266 Days Remaining</h1>
      <div className="flex items-center">
        <button aria-label="Minimize" className="flex w-[34px] justify-center"><span className="mt-[10px] h-[2px] w-[13px] bg-current" /></button>
        <button aria-label="Restore" className="flex w-[34px] justify-center">
          <svg viewBox="0 0 15 13" className="w-[15px]" fill="none" stroke="currentColor"><path d="M3.5 3V1h11v8.5H12" strokeWidth="2" /><path d="M.5 3.5h11v9H.5zM1 4.5h10" /></svg>
        </button>
        <button aria-label="Close" className="flex w-14 justify-center text-white">
          <svg viewBox="0 0 10 10" className="w-[10px]" stroke="currentColor" strokeWidth="1.8"><path d="m1 1 8 8M9 1 1 9" /></svg>
        </button>
      </div>
    </header>
  );
}

function Logo() {
  return (
    <div className="h-[44px] overflow-hidden">
      <button className="flex h-[38px] w-[229px] items-center rounded-b-md border border-t-0 border-white bg-linear-to-b from-[#6ade3c] to-[#08cc08] pl-[5px]">
        <span className="-mt-1 flex bg-linear-to-b from-[#f8f8f8] to-[#bcbcbc] bg-clip-text font-['DejaVu_Sans',sans-serif] text-[34px] font-bold leading-8 text-transparent drop-shadow-[2px_2px_1px_#116a11]">
          CalMAN<span className="ml-[6px]">5</span>
        </span>
        <span className="ml-[11px] flex size-6 items-center justify-center rounded-full bg-linear-to-b from-[#0cc80c] to-[#70e048] text-white">
          <Triangle className="mt-1 size-3" />
        </span>
      </button>
    </div>
  );
}

export default function App() {
  return (
    <div className="flex min-h-screen flex-col bg-[#222] font-['Lato',sans-serif] text-white">
      <TitleBar />
      <Logo />
      <div className="flex flex-1">
        <Sidebar />
        <div className="flex min-w-0 flex-1 flex-col pl-px">
          <TopBar />
          <main className="mr-[2px] grid flex-1 grid-cols-[minmax(0,320fr)_minmax(0,655fr)_minmax(0,693fr)] bg-[#323232]">
            <section>
              <h2 className="ml-6 mt-[18px] whitespace-nowrap text-[40px] leading-[56px] text-[#f2f2f2]">Saturation Sweeps</h2>
              <div className="mt-[30px]"><RgbBalance /></div>
              <div className="ml-[15px] text-[26px] leading-[42px] text-[#f2f2f2]">
                <h3 className="mb-[3px] text-[31px] leading-[44px]">Current Reading</h3>
                <p>x: 0,4143</p>
                <p>y: 0,5218</p>
                <p>fL: 27,515</p>
                <p>cd/m²: 94,274</p>
              </div>
            </section>
            <section>
              <div className="ml-[51px] mr-[34px] mt-[26px] flex">
                <DeltaChart title="DeltaL" from={160} to={168} />
                <DeltaChart title="DeltaC" from={103} to={160} />
                <DeltaChart title="DeltaH" from={124} to={160} />
              </div>
              <div className="mt-[9px]"><Swatches /></div>
              <div className="mt-3"><DeltaEChart /></div>
            </section>
            <section className="pt-4">
              <div className="mr-[2px] border-[6px] border-[#0088a8]"><CieChart /></div>
              <ReadingsTable />
            </section>
          </main>
          <BottomBar />
        </div>
      </div>
      <Taskbar />
    </div>
  );
}
